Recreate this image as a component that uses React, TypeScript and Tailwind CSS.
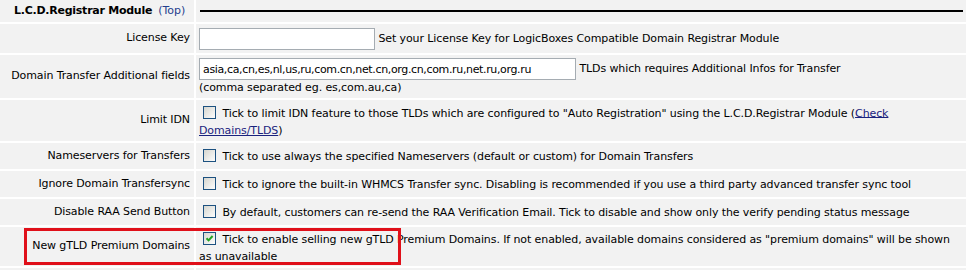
import type { ReactNode } from "react";

const Checkbox = ({ checked = false }: { checked?: boolean }) => (
  <span className="inline-block w-[13px] h-[13px] ml-[4px] mr-[3px] my-[3px] align-middle border border-[#1c5180] bg-[linear-gradient(135deg,#d6d6cf,#fdfdfd)] relative -top-[1px]">
    {checked && (
      <svg viewBox="0 0 11 11" className="w-[11px] h-[11px] block">
        <path d="M2.5 5.2 L4.6 7.4 L8.6 3" fill="none" stroke="#21a121" strokeWidth="2" />
      </svg>
    )}
  </span>
);

const Label = ({ children }: { children: ReactNode }) => (
  <div className="bg-[#f2f2f2] flex items-center justify-end pr-[4px] text-right">{children}</div>
);

const Field = ({ children }: { children: ReactNode }) => (
  <div className="bg-[#f2f2f2] flex items-center px-[3px]">
    <div className="leading-[15px]">{children}</div>
  </div>
);

export default function App() {
  return (
    <div className="relative w-[968px] h-[270px] overflow-hidden bg-white text-black font-['DejaVu_Sans',sans-serif] text-[11px] tracking-[-0.1px]">
      <div className="grid grid-cols-[194px_770px] grid-rows-[22px_29px_43px_41px_26px_26px_26px_39px_26px] gap-[2px]">
        <div className="bg-[#f2f2f2] flex items-center pl-[14px] whitespace-nowrap">
          <span className="font-bold tracking-[-0.25px]">L.C.D.Registrar Module</span>
          <a className="ml-[6px] text-[#24408e] tracking-normal">(Top)</a>
        </div>
        <div className="bg-[#f2f2f2] flex items-center pl-[4px] pr-[3px]">
          <div className="h-[2px] w-full bg-black" />
        </div>

        <Label>License Key</Label>
        <Field>
          <input
            readOnly
            className="w-[176px] h-[22px] border border-[#a5acb2] bg-white px-[3px] align-middle outline-none"
          />{" "}
          Set your License Key for LogicBoxes Compatible Domain Registrar Module
        </Field>

        <Label>Domain Transfer Additional fields</Label>
        <Field>
          <input
            readOnly
            value="asia,ca,cn,es,nl,us,ru,com.cn,net.cn,org.cn,com.ru,net.ru,org.ru"
            className="w-[377px] h-[22px] border border-[#a5acb2] bg-white px-[3px] align-middle outline-none tracking-[-0.35px]"
          />{" "}
          TLDs which requires Additional Infos for Transfer
          <br />
          (comma separated eg. es,com.au,ca)
        </Field>

        <Label>Limit IDN</Label>
        <Field>
          <Checkbox /> Tick to limit IDN feature to those TLDs which are configured to "Auto Registration" using the
          L.C.D.Registrar Module (
          <a className="text-[#1a237e] underline">
            Check
            <br />
            Domains/TLDS
          </a>
          )
        </Field>

        <Label>Nameservers for Transfers</Label>
        <Field>
          <Checkbox /> Tick to use always the specified Nameservers (default or custom) for Domain Transfers
        </Field>

        <Label>Ignore Domain Transfersync</Label>
        <Field>
          <Checkbox /> Tick to ignore the built-in WHMCS Transfer sync. Disabling is recommended if you use a third
          party advanced transfer sync tool
        </Field>

        <Label>Disable RAA Send Button</Label>
        <Field>
          <Checkbox /> By default, customers can re-send the RAA Verification Email. Tick to disable and show only the
          verify pending status message
        </Field>

        <Label>New gTLD Premium Domains</Label>
        <Field>
          <Checkbox checked /> Tick to enable selling new gTLD Premium Domains. If not enabled, available domains
          considered as "premium domains" will be shown
          <br />
          as unavailable
        </Field>

        <div className="bg-[#f2f2f2]" />
        <div className="bg-[#f2f2f2]" />
      </div>

      <div className="absolute left-[24px] top-[228px] w-[377px] h-[37px] border-[3px] border-[#e0101a]" />
    </div>
  );
}
